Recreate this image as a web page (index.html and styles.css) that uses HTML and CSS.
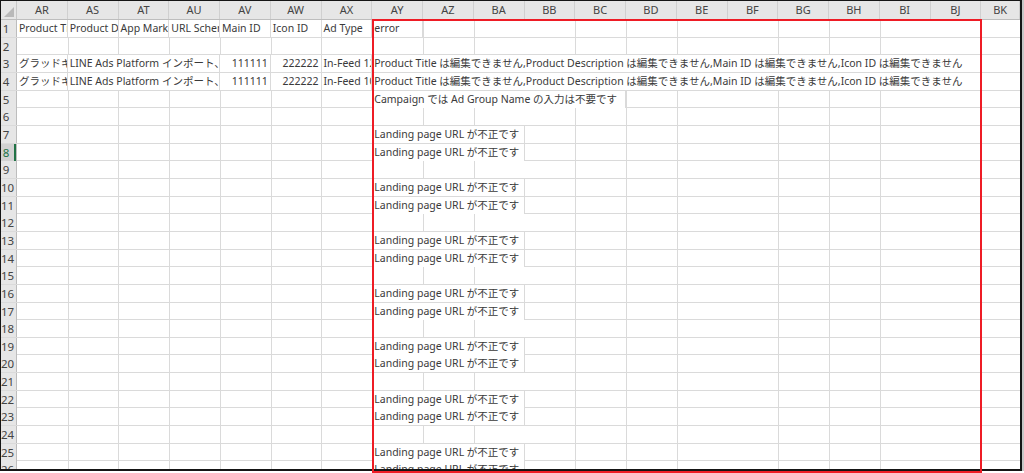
FILE: index.html
```html
<!DOCTYPE html>
<html lang="ja">
<head>
    <meta charset="UTF-8">
    <title>error sheet</title>
    <link rel="stylesheet" href="styles.css">
</head>
<body>
<div class="page">
    <div class="sheet"><!--シート-->
        <div class="colhead">
            <div class="corner"></div>
            <div class="ch">AR</div><div class="ch">AS</div><div class="ch">AT</div><div class="ch">AU</div>
            <div class="ch">AV</div><div class="ch">AW</div><div class="ch">AX</div><div class="ch">AY</div>
            <div class="ch">AZ</div><div class="ch">BA</div><div class="ch">BB</div><div class="ch">BC</div>
            <div class="ch">BD</div><div class="ch">BE</div><div class="ch">BF</div><div class="ch">BG</div>
            <div class="ch">BH</div><div class="ch">BI</div><div class="ch">BJ</div><div class="ch">BK</div>
        </div>

        <div class="row">
            <div class="rh">1</div>
            <div class="cell ar">Product Title</div>
            <div class="cell as">Product Description</div>
            <div class="cell at">App Market URL</div>
            <div class="cell au">URL Scheme</div>
            <div class="cell av">Main ID</div>
            <div class="cell aw">Icon ID</div>
            <div class="cell ax">Ad Type</div>
            <div class="cell ay">error</div>
        </div>
        <div class="row"><div class="rh">2</div></div>
        <div class="row">
            <div class="rh">3</div>
            <div class="cell ar">グラッドキューブ</div>
            <div class="cell as span3">LINE Ads Platform インポート、</div>
            <div class="cell av num">111111</div>
            <div class="cell aw num">222222</div>
            <div class="cell ax">In-Feed 1200x628</div>
            <div class="cell ay span12">Product Title は編集できません,Product Description は編集できません,Main ID は編集できません,Icon ID は編集できません</div>
        </div>
        <div class="row">
            <div class="rh">4</div>
            <div class="cell ar">グラッドキューブ</div>
            <div class="cell as span3">LINE Ads Platform インポート、</div>
            <div class="cell av num">111111</div>
            <div class="cell aw num">222222</div>
            <div class="cell ax">In-Feed 1080x1080</div>
            <div class="cell ay span12">Product Title は編集できません,Product Description は編集できません,Main ID は編集できません,Icon ID は編集できません</div>
        </div>
        <div class="row">
            <div class="rh">5</div>
            <div class="cell ay span5">Campaign では Ad Group Name の入力は不要です</div>
        </div>
        <div class="row"><div class="rh">6</div></div>
        <div class="row"><div class="rh">7</div><div class="cell ay span3">Landing page URL が不正です</div></div>
        <div class="row"><div class="rh current">8</div><div class="cell ay span3">Landing page URL が不正です</div></div>
        <div class="row"><div class="rh">9</div></div>
        <div class="row"><div class="rh">10</div><div class="cell ay span3">Landing page URL が不正です</div></div>
        <div class="row"><div class="rh">11</div><div class="cell ay span3">Landing page URL が不正です</div></div>
        <div class="row"><div class="rh">12</div></div>
        <div class="row"><div class="rh">13</div><div class="cell ay span3">Landing page URL が不正です</div></div>
        <div class="row"><div class="rh">14</div><div class="cell ay span3">Landing page URL が不正です</div></div>
        <div class="row"><div class="rh">15</div></div>
        <div class="row"><div class="rh">16</div><div class="cell ay span3">Landing page URL が不正です</div></div>
        <div class="row"><div class="rh">17</div><div class="cell ay span3">Landing page URL が不正です</div></div>
        <div class="row"><div class="rh">18</div></div>
        <div class="row"><div class="rh">19</div><div class="cell ay span3">Landing page URL が不正です</div></div>
        <div class="row"><div class="rh">20</div><div class="cell ay span3">Landing page URL が不正です</div></div>
        <div class="row"><div class="rh">21</div></div>
        <div class="row"><div class="rh">22</div><div class="cell ay span3">Landing page URL が不正です</div></div>
        <div class="row"><div class="rh">23</div><div class="cell ay span3">Landing page URL が不正です</div></div>
        <div class="row"><div class="rh">24</div></div>
        <div class="row"><div class="rh">25</div><div class="cell ay span3">Landing page URL が不正です</div></div>
        <div class="row"><div class="rh">26</div><div class="cell ay span3">Landing page URL が不正です</div></div>
    </div>
    <!--赤枠-->
    <div class="mark"></div>
</div>
</body>
</html>
```

FILE: styles.css
```css
* {
    margin: 0;
    padding: 0;
    box-sizing: border-box;
}

body {
    background: #fff;
    font-family: "Noto Sans", "Noto Sans CJK JP", sans-serif;
    color: #3a3a3a;
}

.page {
    position: relative;
    width: 1024px;
    height: 473px;
}

.sheet {
    width: 1022px;
    height: 471px;
    border-top: 1px solid #151515;
    border-left: 1px solid #151515;
    border-right: 2px solid #151515;
    border-bottom: 2px solid #151515;
    box-shadow: 2px 0 0 #c6c6c6;
    overflow: hidden;
}

.colhead,
.row {
    display: grid;
    grid-template-columns: 16px repeat(19, 50.75px) 1fr;
}

.colhead {
    height: 19px;
    background: #e6e6e6;
    border-bottom: 1px solid #bdbdbd;
}

.corner {
    position: relative;
    border-right: 1px solid #c8c8c8;
}

.corner::after {
    content: "";
    position: absolute;
    right: 2px;
    bottom: 2px;
    border-left: 10px solid transparent;
    border-bottom: 10px solid #b9b9b9;
}

.ch {
    border-right: 1px solid #d0d0d0;
    text-align: center;
    font-size: 11px;
    line-height: 18px;
    color: #444;
}

.row {
    height: 17.67px;
    border-bottom: 1px solid #dadada;
    background-color: #fff;
    background-image: repeating-linear-gradient(to right, transparent 0 49.75px, #dadada 49.75px 50.75px);
    background-position: 17px 0;
}

.rh {
    background: #e6e6e6;
    border-right: 1px solid #bdbdbd;
    padding-right: 5px;
    text-align: center;
    font-size: 11.5px;
    line-height: 17px;
    color: #444;
    white-space: nowrap;
}

.rh.current {
    background: #d2d2d2;
    color: #217346;
    box-shadow: inset -2px 0 0 #217346;
}

.cell {
    background: #fff;
    border-right: 1px solid #dadada;
    padding: 0 2px;
    font-size: 10.5px;
    line-height: 17px;
    white-space: nowrap;
    overflow: hidden;
}

.num {
    text-align: right;
}

.ar { grid-column-start: 2; }
.as { grid-column-start: 3; }
.at { grid-column-start: 4; }
.au { grid-column-start: 5; }
.av { grid-column-start: 6; }
.aw { grid-column-start: 7; }
.ax { grid-column-start: 8; }
.ay { grid-column-start: 9; }

.span3 { grid-column-end: span 3; }
.span5 { grid-column-end: span 5; }
.span12 { grid-column-end: span 12; }

.mark {
    position: absolute;
    left: 372px;
    top: 19px;
    width: 610px;
    height: 454px;
    border: 2px solid #ee1c25;
}
```
